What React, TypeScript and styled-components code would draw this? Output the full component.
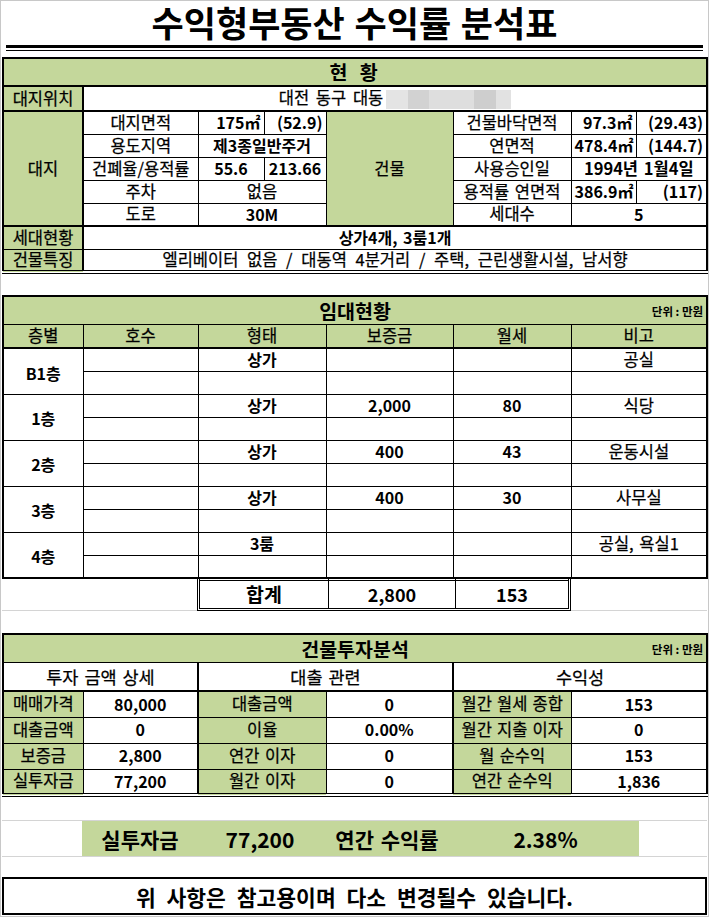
import React from 'react'
import styled, { createGlobalStyle } from 'styled-components'

const GREEN = '#c4d79b'
const GRID = '#d4d4d4'
const COLS = [80, 115, 66, 62, 127, 118, 65, 71]

const GlobalStyle = createGlobalStyle`
  html, body {
    margin: 0;
    padding: 0;
    background: #fff;
  }
  body {
    font-family: 'Noto Sans CJK KR', 'Noto Sans', sans-serif;
    color: #000;
  }
`

const Page = styled.div`
  width: 709px;
  height: 917px;
  box-sizing: border-box;
  border: 1px solid #c8c8c8;
  padding: 0 1px;
  display: flex;
  flex-direction: column;
`

const Title = styled.h1`
  margin: 0;
  padding-top: 3px;
  height: 41px;
  line-height: 41px;
  text-align: center;
  font-family: 'Liberation Sans', 'Noto Sans CJK KR', sans-serif;
  font-size: 35px;
  font-weight: 700;
`

const Rule = styled.div`
  margin: 0 4px;
  height: 2px;
  border-top: 3px solid #000;
  border-bottom: 1px solid #000;
`

const Sheet = styled.table<{ $gap: number; $double?: boolean }>`
  margin-top: ${p => p.$gap}px;
  width: 704px;
  table-layout: fixed;
  border-collapse: collapse;
  border: 2px solid #000;
  border-bottom: ${p => (p.$double ? '4px double #000' : '2px solid #000')};
`

const Col = styled.col<{ $w: number }>`
  width: ${p => p.$w}px;
`

const Row = styled.tr<{ $h: number }>`
  height: ${p => p.$h}px;
`

type CellProps = {
  $green?: boolean
  $bold?: boolean
  $align?: 'left' | 'center' | 'right'
  $size?: number
  $spacing?: number
  $low?: boolean
  $bt?: boolean
  $bb?: boolean
  $bl?: boolean
  $br?: boolean
}

const Cell = styled.td<CellProps>`
  border: 1px solid #000;
  ${p => (p.$bt ? 'border-top-width: 2px;' : '')}
  ${p => (p.$bb ? 'border-bottom-width: 2px;' : '')}
  ${p => (p.$bl ? 'border-left-width: 2px;' : '')}
  ${p => (p.$br ? 'border-right-width: 2px;' : '')}
  background: ${p => (p.$green ? GREEN : '#fff')};
  font-weight: ${p => (p.$bold ? 700 : 400)};
  -webkit-text-stroke: ${p => (p.$bold ? '0' : '0.25px #000')};
  text-align: ${p => p.$align ?? 'center'};
  font-size: ${p => p.$size ?? (p.$bold ? 16 : 16.5)}px;
  word-spacing: ${p => p.$spacing ?? 2}px;
  padding: ${p => (p.$low ? '4px 3px 0' : '0 3px')};
  line-height: 1.2;
  white-space: nowrap;
  vertical-align: middle;
`

const HeadInner = styled.div`
  display: grid;
  grid-template-columns: 1fr auto 1fr;
  align-items: center;
  -webkit-text-stroke: 0;
`

const HeadTitle = styled.span<{ $spaced?: boolean }>`
  grid-column: 2;
  font-size: 19.5px;
  font-weight: 700;
  letter-spacing: ${p => (p.$spaced ? '3px' : '0')};
`

const Unit = styled.span`
  grid-column: 3;
  justify-self: end;
  font-size: 11.5px;
  font-weight: 700;
  word-spacing: 0;
  margin-top: 3px;
`

const Blur = styled.span`
  display: inline-block;
  width: 125px;
  height: 19px;
  vertical-align: middle;
  margin-left: 3px;
  background: linear-gradient(
    90deg,
    #e4e4e4 0 22px,
    #d2d2d2 22px 43px,
    #dedede 43px 88px,
    #cecece 88px 110px,
    #e2e2e2 110px
  );
`

const TotalRow = styled.div`
  display: grid;
  grid-template-columns: 195px 374px 1fr;
  height: 31px;
  border-bottom: 1px solid ${GRID};
`

const TotalBox = styled.div`
  grid-column: 2;
  display: grid;
  grid-template-columns: 128px 127px 1fr;
  border: 3px double #000;
  border-top: 0;
  box-shadow: inset 0 1px 0 #fff, inset 0 2px 0 #000;
`

const TotalCell = styled.div<{ $size: number }>`
  display: flex;
  align-items: center;
  justify-content: center;
  font-size: ${p => p.$size}px;
  font-weight: 700;
  & + & {
    border-left: 1px solid #000;
  }
`

const SummaryRow = styled.div`
  margin-top: 23px;
  display: grid;
  grid-template-columns: 80px 557px 1fr;
  height: 35px;
  border-top: 1px solid ${GRID};
  border-bottom: 1px solid ${GRID};
`

const SummaryBand = styled.div`
  grid-column: 2;
  background: ${GREEN};
  display: grid;
  grid-template-columns: 116px 124px 130px 1fr;
  align-items: center;
`

const SummaryItem = styled.span`
  text-align: center;
  font-size: 21px;
  font-weight: 700;
  word-spacing: 2px;
`

const Footer = styled.div`
  margin-top: 20px;
  height: 34px;
  border: 2px solid #000;
  display: flex;
  align-items: center;
  justify-content: center;
  font-size: 21.5px;
  font-weight: 700;
  word-spacing: 6px;
`

const Cols = () => (
  <colgroup>
    {COLS.map((w, i) => (
      <Col key={i} $w={w} />
    ))}
  </colgroup>
)

const rentals = [
  { floor: 'B1층', type: '상가', deposit: '', rent: '', note: '공실' },
  { floor: '1층', type: '상가', deposit: '2,000', rent: '80', note: '식당' },
  { floor: '2층', type: '상가', deposit: '400', rent: '43', note: '운동시설' },
  { floor: '3층', type: '상가', deposit: '400', rent: '30', note: '사무실' },
  { floor: '4층', type: '3룸', deposit: '', rent: '', note: '공실, 욕실1' },
]

const invest = [
  ['매매가격', '80,000', '대출금액', '0', '월간 월세 종합', '153'],
  ['대출금액', '0', '이율', '0.00%', '월간 지출 이자', '0'],
  ['보증금', '2,800', '연간 이자', '0', '월 순수익', '153'],
  ['실투자금', '77,200', '월간 이자', '0', '연간 순수익', '1,836'],
]

const StatusSection = () => (
  <Sheet $gap={6} $double>
    <Cols />
    <tbody>
      <Row $h={28}>
        <Cell colSpan={8} $green $bb>
          <HeadInner>
            <HeadTitle $spaced>현 황</HeadTitle>
          </HeadInner>
        </Cell>
      </Row>
      <Row $h={25}>
        <Cell $green $br $bb>대지위치</Cell>
        <Cell colSpan={7} $bb $spacing={3}>
          대전 동구 대동<Blur />
        </Cell>
      </Row>
      <Row $h={23}>
        <Cell rowSpan={5} $green $br $bb>대지</Cell>
        <Cell>대지면적</Cell>
        <Cell $bold $align="right">175㎡</Cell>
        <Cell $bold $align="right">(52.9)</Cell>
        <Cell rowSpan={5} $green $bb>건물</Cell>
        <Cell>건물바닥면적</Cell>
        <Cell $bold $align="right">97.3㎡</Cell>
        <Cell $bold $align="right">(29.43)</Cell>
      </Row>
      <Row $h={23}>
        <Cell>용도지역</Cell>
        <Cell colSpan={2} $bold>제3종일반주거</Cell>
        <Cell>연면적</Cell>
        <Cell $bold $align="right">478.4㎡</Cell>
        <Cell $bold $align="right">(144.7)</Cell>
      </Row>
      <Row $h={23}>
        <Cell>건폐율/용적률</Cell>
        <Cell $bold>55.6</Cell>
        <Cell $bold>213.66</Cell>
        <Cell>사용승인일</Cell>
        <Cell colSpan={2} $bold $size={16.5}>1994년 1월4일</Cell>
      </Row>
      <Row $h={23}>
        <Cell>주차</Cell>
        <Cell colSpan={2}>없음</Cell>
        <Cell>용적률 연면적</Cell>
        <Cell $bold $align="right">386.9㎡</Cell>
        <Cell $bold $align="right">(117)</Cell>
      </Row>
      <Row $h={23}>
        <Cell $bb>도로</Cell>
        <Cell colSpan={2} $bold $bb>30M</Cell>
        <Cell $bb>세대수</Cell>
        <Cell colSpan={2} $bold $bb>5</Cell>
      </Row>
      <Row $h={23}>
        <Cell $green $br>세대현황</Cell>
        <Cell colSpan={7} $bold>상가4개, 3룸1개</Cell>
      </Row>
      <Row $h={23}>
        <Cell $green $br>건물특징</Cell>
        <Cell colSpan={7} $spacing={5}>
          엘리베이터 없음 / 대동역 4분거리 / 주택, 근린생활시설, 남서향
        </Cell>
      </Row>
    </tbody>
  </Sheet>
)

const RentalSection = () => (
  <>
    <Sheet $gap={21}>
      <Cols />
      <tbody>
        <Row $h={28}>
          <Cell colSpan={8} $green>
            <HeadInner>
              <HeadTitle>임대현황</HeadTitle>
              <Unit>단위 : 만원</Unit>
            </HeadInner>
          </Cell>
        </Row>
        <Row $h={24}>
          <Cell $green $bb>층별</Cell>
          <Cell $green $bb>호수</Cell>
          <Cell colSpan={2} $green $bb>형태</Cell>
          <Cell $green $bb>보증금</Cell>
          <Cell $green $bb>월세</Cell>
          <Cell colSpan={2} $green $bb>비고</Cell>
        </Row>
        {rentals.map(r => (
          <React.Fragment key={r.floor}>
            <Row $h={23}>
              <Cell rowSpan={2} $bold $low>{r.floor}</Cell>
              <Cell />
              <Cell colSpan={2} $bold>{r.type}</Cell>
              <Cell $bold>{r.deposit}</Cell>
              <Cell $bold>{r.rent}</Cell>
              <Cell colSpan={2}>{r.note}</Cell>
            </Row>
            <Row $h={23}>
              <Cell />
              <Cell colSpan={2} />
              <Cell />
              <Cell />
              <Cell colSpan={2} />
            </Row>
          </React.Fragment>
        ))}
      </tbody>
    </Sheet>
    <TotalRow>
      <TotalBox>
        <TotalCell $size={19.5}>합계</TotalCell>
        <TotalCell $size={18}>2,800</TotalCell>
        <TotalCell $size={18}>153</TotalCell>
      </TotalBox>
    </TotalRow>
  </>
)

const InvestSection = () => (
  <Sheet $gap={22} $double>
    <Cols />
    <tbody>
      <Row $h={28}>
        <Cell colSpan={8} $green>
          <HeadInner>
            <HeadTitle>건물투자분석</HeadTitle>
            <Unit>단위 : 만원</Unit>
          </HeadInner>
        </Cell>
      </Row>
      <Row $h={29}>
        <Cell colSpan={2} $bb $br $size={17.5}>투자 금액 상세</Cell>
        <Cell colSpan={3} $bb $br $size={17.5}>대출 관련</Cell>
        <Cell colSpan={3} $bb $size={17.5}>수익성</Cell>
      </Row>
      {invest.map(r => (
        <Row $h={26} key={r[0] + r[2]}>
          <Cell $green>{r[0]}</Cell>
          <Cell $bold $br>{r[1]}</Cell>
          <Cell colSpan={2} $green>{r[2]}</Cell>
          <Cell $bold $br>{r[3]}</Cell>
          <Cell $green $spacing={1.5}>{r[4]}</Cell>
          <Cell colSpan={2} $bold>{r[5]}</Cell>
        </Row>
      ))}
    </tbody>
  </Sheet>
)

export default function App() {
  return (
    <>
      <GlobalStyle />
      <Page>
        <Title>수익형부동산 수익률 분석표</Title>
        <Rule />
        <StatusSection />
        <RentalSection />
        <InvestSection />
        <SummaryRow>
          <SummaryBand>
            <SummaryItem>실투자금</SummaryItem>
            <SummaryItem>77,200</SummaryItem>
            <SummaryItem>연간 수익률</SummaryItem>
            <SummaryItem>2.38%</SummaryItem>
          </SummaryBand>
        </SummaryRow>
        <Footer>위 사항은 참고용이며 다소 변경될수 있습니다.</Footer>
      </Page>
    </>
  )
}
